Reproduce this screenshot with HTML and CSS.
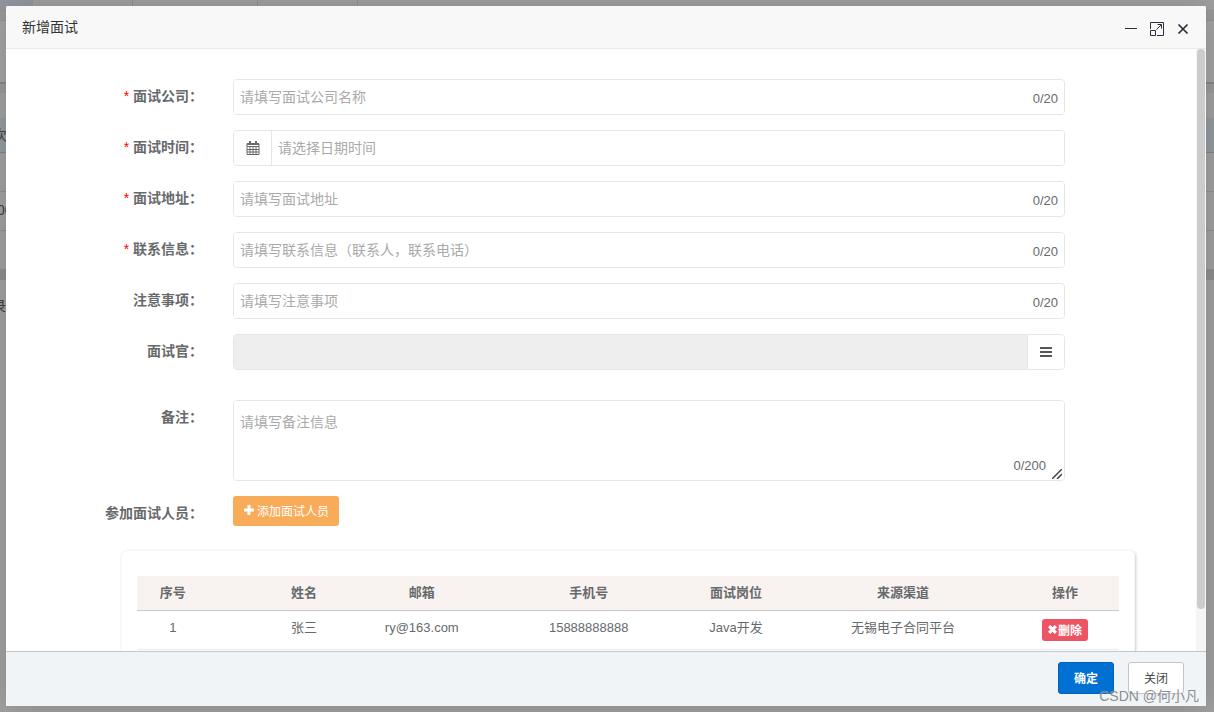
FILE: index.html
```html
<!DOCTYPE html>
<html lang="zh-CN">
<head>
<meta charset="utf-8">
<title>新增面试</title>
<link rel="stylesheet" href="styles.css">
</head>
<body>
<div class="backdrop" aria-hidden="true">
  <div class="page-tabs"><span class="tab tab-active"></span><span class="tab"></span><span class="tab tab-wide"></span><span class="tab"></span></div>
  <div class="page-bar"></div>
  <div class="page-filter"></div>
  <div class="page-toolbar"></div>
  <div class="page-head">次</div>
  <div class="page-row"></div>
  <div class="page-row">00</div>
  <div class="page-row"></div>
  <div class="page-gap"></div>
  <div class="page-note">录</div>
</div>
<div class="dialog" role="dialog" aria-labelledby="dialog-title">
  <header class="dialog-header">
    <h1 id="dialog-title" class="dialog-title">新增面试</h1>
    <div class="window-tools">
      <button type="button" class="tool" aria-label="最小化"><svg width="16" height="16" viewBox="0 0 16 16"><path d="M2 7.500h12" stroke="#2e2d3c"/></svg></button>
      <button type="button" class="tool" aria-label="最大化"><svg width="16" height="16" viewBox="0 0 16 16" fill="none" stroke="#2e2d3c"><path d="M1.500 8V1.500h13v13H8M1.500 9.500h5v5h-5zM7.500 8.500l4.500-4.500M8.500 3.500h4v4"/></svg></button>
      <button type="button" class="tool" aria-label="关闭窗口"><svg width="16" height="16" viewBox="0 0 16 16"><path d="M3.500 3.500l9 9M12.500 3.500l-9 9" stroke="#2e2d3c" stroke-width="1.700"/></svg></button>
    </div>
  </header>
  <div class="dialog-body">
    <form class="form" id="interview-form">
      <div class="field-row">
        <label class="label required" for="company">面试公司：</label>
        <div class="control"><input class="input" id="company" type="text" maxlength="20" placeholder="请填写面试公司名称"><span class="count">0/20</span></div>
      </div>
      <div class="field-row">
        <label class="label required" for="time">面试时间：</label>
        <div class="control"><span class="addon addon-left"><svg width="14" height="14" viewBox="0 0 14 14" fill="none" stroke="#676a6c"><path d="M1 2.500h12v11H1zM1 5.500h12M1 8.500h12M1 11h12M4 5v8M7 5v8M10 5v8"/><path d="M1 3h12M4 0v4M10 0v4" stroke-width="2"/></svg></span><input class="input" id="time" type="text" placeholder="请选择日期时间"></div>
      </div>
      <div class="field-row">
        <label class="label required" for="address">面试地址：</label>
        <div class="control"><input class="input" id="address" type="text" maxlength="20" placeholder="请填写面试地址"><span class="count">0/20</span></div>
      </div>
      <div class="field-row">
        <label class="label required" for="contact">联系信息：</label>
        <div class="control"><input class="input" id="contact" type="text" maxlength="20" placeholder="请填写联系信息（联系人，联系电话）"><span class="count">0/20</span></div>
      </div>
      <div class="field-row">
        <label class="label" for="notice">注意事项：</label>
        <div class="control"><input class="input" id="notice" type="text" maxlength="20" placeholder="请填写注意事项"><span class="count">0/20</span></div>
      </div>
      <div class="field-row field-row-spaced">
        <label class="label" for="interviewer">面试官：</label>
        <div class="control"><input class="input input-readonly" id="interviewer" type="text" readonly><button type="button" class="addon addon-right" aria-label="选择面试官"><svg width="12" height="12" viewBox="0 0 12 12"><path d="M0 2h12M0 6h12M0 10h12" stroke="#55585a" stroke-width="2"/></svg></button></div>
      </div>
      <div class="field-row">
        <label class="label" for="remark">备注：</label>
        <div class="control control-area"><textarea class="input textarea" id="remark" maxlength="200" placeholder="请填写备注信息"></textarea><span class="count count-area">0/200</span><svg class="grip" width="10" height="10" viewBox="0 0 10 10"><path d="M0 10L10 0M5 10l5-5" stroke="#444" stroke-width="1.500"/></svg></div>
      </div>
      <div class="field-row">
        <span class="label">参加面试人员：</span>
        <div><button type="button" class="btn-add"><svg width="10" height="10" viewBox="0 0 10 10"><path d="M5 0v10M0 5h10" stroke="#fff" stroke-width="3"/></svg>添加面试人员</button></div>
      </div>
      <div class="panel">
        <table class="people">
          <thead><tr><th class="c-index">序号</th><th class="c-name">姓名</th><th class="c-mail">邮箱</th><th class="c-phone">手机号</th><th class="c-job">面试岗位</th><th class="c-source">来源渠道</th><th class="c-action">操作</th></tr></thead>
          <tbody><tr><td class="c-index">1</td><td>张三</td><td>ry@163.com</td><td>15888888888</td><td>Java开发</td><td>无锡电子合同平台</td><td class="c-action"><button type="button" class="btn-delete"><svg width="9" height="9" viewBox="0 0 8 8"><path d="M1 1l6 6M7 1L1 7" stroke="#fff" stroke-width="2.800"/></svg>删除</button></td></tr></tbody>
        </table>
      </div>
    </form>
    <div class="track"><div class="thumb"></div></div>
  </div>
  <footer class="dialog-footer">
    <button type="submit" form="interview-form" class="btn btn-primary">确定</button>
    <button type="button" class="btn">关闭</button>
  </footer>
</div>
<div class="watermark">CSDN @何小凡</div>
</body>
</html>
```
FILE: styles.css
```css
* { box-sizing: border-box; }

body {
  margin: 0;
  height: 100vh;
  padding: 6px 8px 6px 6px;
  overflow: hidden;
  background: #9f9f9f;
  color: #676a6c;
  font: 13px/20px "Liberation Sans", "Noto Sans CJK SC", sans-serif;
}

button, input, textarea { font-family: inherit; color: inherit; }
button { cursor: pointer; }
svg { display: block; }

/* Dimmed page behind the dialog */
.backdrop { position: absolute; inset: 0; z-index: -1; overflow: hidden; color: #3d4043; font-size: 14px; }
.page-tabs { display: flex; height: 11px; border-bottom: 1px solid #939393; }
.tab { width: 100px; border-right: 1px solid #8f8f8f; }
.tab-active { width: 33px; background: #93969e; border: 0; }
.tab-wide { width: 125px; }
.page-bar { height: 10px; background: #989898; border-bottom: 1px solid #909090; }
.page-filter { height: 63px; background: #a2a2a2; border-bottom: 2px solid #858585; }
.page-toolbar { height: 34px; border-top: 9px solid #989898; }
.page-head { height: 35px; background: #92999e; border-bottom: 1px solid #828282; line-height: 34px; text-indent: -7px; }
.page-row { height: 39px; border-bottom: 1px solid #8f8f8f; line-height: 36px; text-indent: -3px; }
.page-gap { height: 10px; background: #8c8c8c; }
.page-note { padding-top: 16px; text-indent: -8px; }

/* Dialog frame */
.dialog { display: flex; flex-direction: column; height: 100%; background: #fff; border-radius: 2px; box-shadow: 1px 1px 30px rgba(0, 0, 0, .15); }
.dialog-header { display: flex; justify-content: space-between; align-items: center; height: 43px; padding: 0 15px 0 16px; background: #f8f8f8; border-bottom: 1px solid #e7eaec; border-radius: 2px 2px 0 0; }
.dialog-title { margin: 0; color: #333; font-size: 14px; font-weight: 400; }
.window-tools { display: flex; gap: 10px; padding-top: 3px; }
.tool { padding: 0; border: 0; background: none; }
.dialog-body { display: flex; flex: 1; min-height: 0; overflow: hidden; }
.form { flex: 1; min-width: 0; padding: 30px 61px 0 0; }
.track { width: 10px; padding: 0 1px; background: #f5f5f5; }
.thumb { height: 93%; background: #ccc; border-radius: 4px; }

/* Fields */
.field-row { display: grid; grid-template-columns: 197px 1fr; column-gap: 30px; margin: 0 70px 15px 0; }
.field-row-spaced { margin-bottom: 30px; }
.label { padding-top: 7px; text-align: right; font-size: 14px; font-weight: 700; }
.required::before { content: "* "; color: #f00; font-weight: 400; }
.control { position: relative; display: flex; height: 36px; border: 1px solid #e5e6e7; border-radius: 4px; overflow: hidden; }
.control-area { height: 81px; }
.input { flex: 1; min-width: 0; padding: 0 6px; border: 0; outline: 0; background: #fff; font-size: 14px; line-height: 20px; }
.input::placeholder { color: #aaa; opacity: 1; }
.input-readonly { background: #eee; }
.textarea { padding-top: 11px; resize: none; }
.count { position: absolute; right: 6px; top: 9px; }
.count-area { right: 18px; top: 55px; }
.grip { position: absolute; right: 2px; bottom: 1px; }
.addon { display: flex; align-items: center; justify-content: center; width: 38px; padding: 0; border: 0; background: #fff; }
.addon-left { border-right: 1px solid #e5e6e7; }
.addon-right { width: 37px; border-left: 1px solid #e5e6e7; }
.btn-add { display: flex; align-items: center; gap: 3px; height: 30px; padding: 0 10px 2px 11px; border: 0; border-radius: 3px; background: #f8ac59; color: #fff; font-size: 12px; }

/* Participants */
.panel { margin: 24px 0 0 115px; padding: 25px 15px; border: 1px solid #f6f6f6; border-radius: 6px; box-shadow: 1px 1px 3px rgba(0, 0, 0, .2); }
.people { width: 100%; table-layout: fixed; border-collapse: collapse; text-align: center; }
.people th { height: 34px; padding: 0; background: #f8f3f0; border-bottom: 1px solid #c8c8c8; }
.people td { height: 39px; padding: 0 0 4px; border-bottom: 1px solid #e7eaec; }
.people td.c-action { padding: 0; }
.people .c-index { width: 13%; padding-right: 56px; }
.c-name { width: 8%; }
.c-mail { width: 16%; }
.c-phone { width: 18%; }
.c-job { width: 12%; }
.c-source { width: 22%; }
.c-action { width: 11%; }
.btn-delete { display: inline-flex; align-items: center; gap: 1px; height: 22px; padding: 0 6px; border: 0; border-radius: 3px; background: #ed5565; color: #fff; font-size: 12px; font-weight: 700; vertical-align: middle; }

/* Footer */
.dialog-footer { display: flex; justify-content: flex-end; gap: 14px; height: 55px; padding: 10px 22px; background: #f0f4f7; border-top: 1px solid #c5c6c8; }
.btn { width: 56px; height: 32px; padding: 0 0 2px; border: 1px solid #c0c4cc; border-radius: 3px; background: #fff; color: #444; font-size: 12px; }
.btn-primary { border-color: #0062b8; background: #0070d2; color: #fff; font-weight: 700; }

.watermark { position: absolute; right: 15px; bottom: 6px; color: #777c80; font-size: 14px; text-shadow: 0 0 1px #fff; opacity: .85; }
```
